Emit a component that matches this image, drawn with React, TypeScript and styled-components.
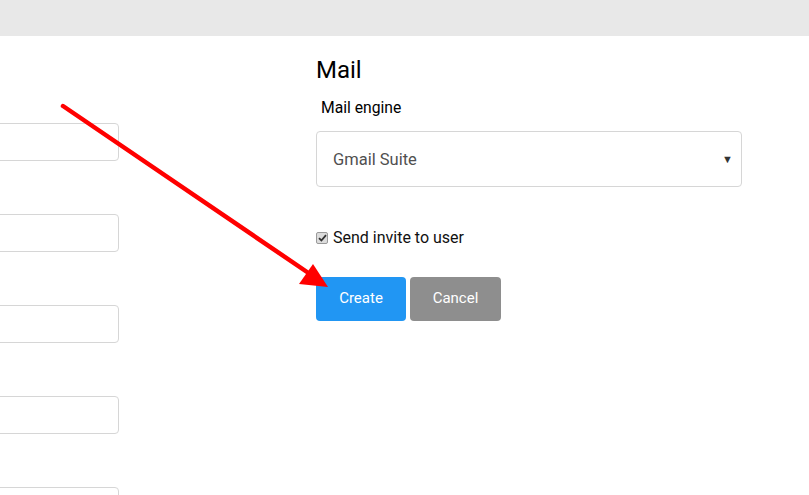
import styled, { createGlobalStyle } from "styled-components";

const GlobalStyle = createGlobalStyle`
  html, body {
    margin: 0;
    padding: 0;
    background: #fff;
    font-family: Roboto, "Liberation Sans", Arial, sans-serif;
    color: #212121;
  }
`;

const Page = styled.div`
  position: relative;
  width: 809px;
  height: 495px;
  overflow: hidden;
`;

const TopBar = styled.div`
  height: 36px;
  background: #e8e8e8;
`;

const Columns = styled.div`
  display: flex;
  gap: 197px;
`;

const LeftColumn = styled.div`
  width: 119px;
  overflow: hidden;
  padding-top: 87px;
  display: flex;
  flex-direction: column;
  gap: 53px;
`;

const TextField = styled.div`
  height: 38px;
  margin-left: -20px;
  border: 1px solid #d6d6d6;
  border-radius: 4px;
  box-sizing: border-box;
  flex: none;
`;

const RightColumn = styled.div`
  width: 426px;
  padding-top: 19px;
`;

const Heading = styled.h2`
  margin: 0;
  font-size: 24px;
  font-weight: 400;
  color: #000;
  line-height: 30px;
`;

const Label = styled.label`
  display: block;
  margin: 13px 0 0 5px;
  font-size: 15.7px;
  color: #000;
  line-height: 20px;
`;

const SelectBox = styled.div`
  margin-top: 13px;
  height: 56px;
  border: 1px solid #d6d6d6;
  border-radius: 4px;
  box-sizing: border-box;
  display: flex;
  align-items: center;
  justify-content: space-between;
  padding: 0 8px 0 16px;
  font-size: 16.5px;
  color: #505050;
`;

const Caret = styled.span`
  font-size: 11px;
  color: #333;
`;

const CheckRow = styled.label`
  margin-top: 41px;
  display: flex;
  align-items: center;
  gap: 5px;
  font-size: 16px;
  color: #111;
  line-height: 20px;
`;

const CheckBox = styled.span`
  width: 12px;
  height: 12px;
  border: 1px solid #9a9a9a;
  border-radius: 2px;
  background: #dcdcdc;
  box-sizing: border-box;
  display: flex;
  align-items: center;
  justify-content: center;
`;

const Actions = styled.div`
  margin-top: 29px;
  display: flex;
  gap: 4px;
`;

const Button = styled.button<{ $variant: "primary" | "secondary" }>`
  height: 44px;
  width: ${(p) => (p.$variant === "primary" ? "90px" : "91px")};
  padding: 0 0 3px;
  border: none;
  border-radius: 4px;
  background: ${(p) => (p.$variant === "primary" ? "#2196f3" : "#8e8e8e")};
  color: #fff;
  font-family: Roboto, "Liberation Sans", Arial, sans-serif;
  font-size: 15px;
  font-weight: 400;
`;

const ArrowLayer = styled.svg`
  position: absolute;
  left: 0;
  top: 0;
  pointer-events: none;
`;

export default function App() {
  return (
    <Page>
      <GlobalStyle />
      <TopBar />
      <Columns>
        <LeftColumn>
          {[0, 1, 2, 3, 4].map((i) => (
            <TextField key={i} />
          ))}
        </LeftColumn>
        <RightColumn>
          <Heading>Mail</Heading>
          <Label>Mail engine</Label>
          <SelectBox>
            <span>Gmail Suite</span>
            <Caret>▼</Caret>
          </SelectBox>
          <CheckRow>
            <CheckBox>
              <svg width="9" height="8" viewBox="0 0 9 8">
                <path d="M1 4.2 L3.4 6.5 L8 1.2" fill="none" stroke="#333" strokeWidth="1.8" />
              </svg>
            </CheckBox>
            Send invite to user
          </CheckRow>
          <Actions>
            <Button $variant="primary">Create</Button>
            <Button $variant="secondary">Cancel</Button>
          </Actions>
        </RightColumn>
      </Columns>
      <ArrowLayer width="809" height="495">
        <line x1="63" y1="106" x2="307" y2="272" stroke="#f00" strokeWidth="4.5" strokeLinecap="round" />
        <polygon points="328,287 299,284 313,264" fill="#f00" />
      </ArrowLayer>
    </Page>
  );
}
